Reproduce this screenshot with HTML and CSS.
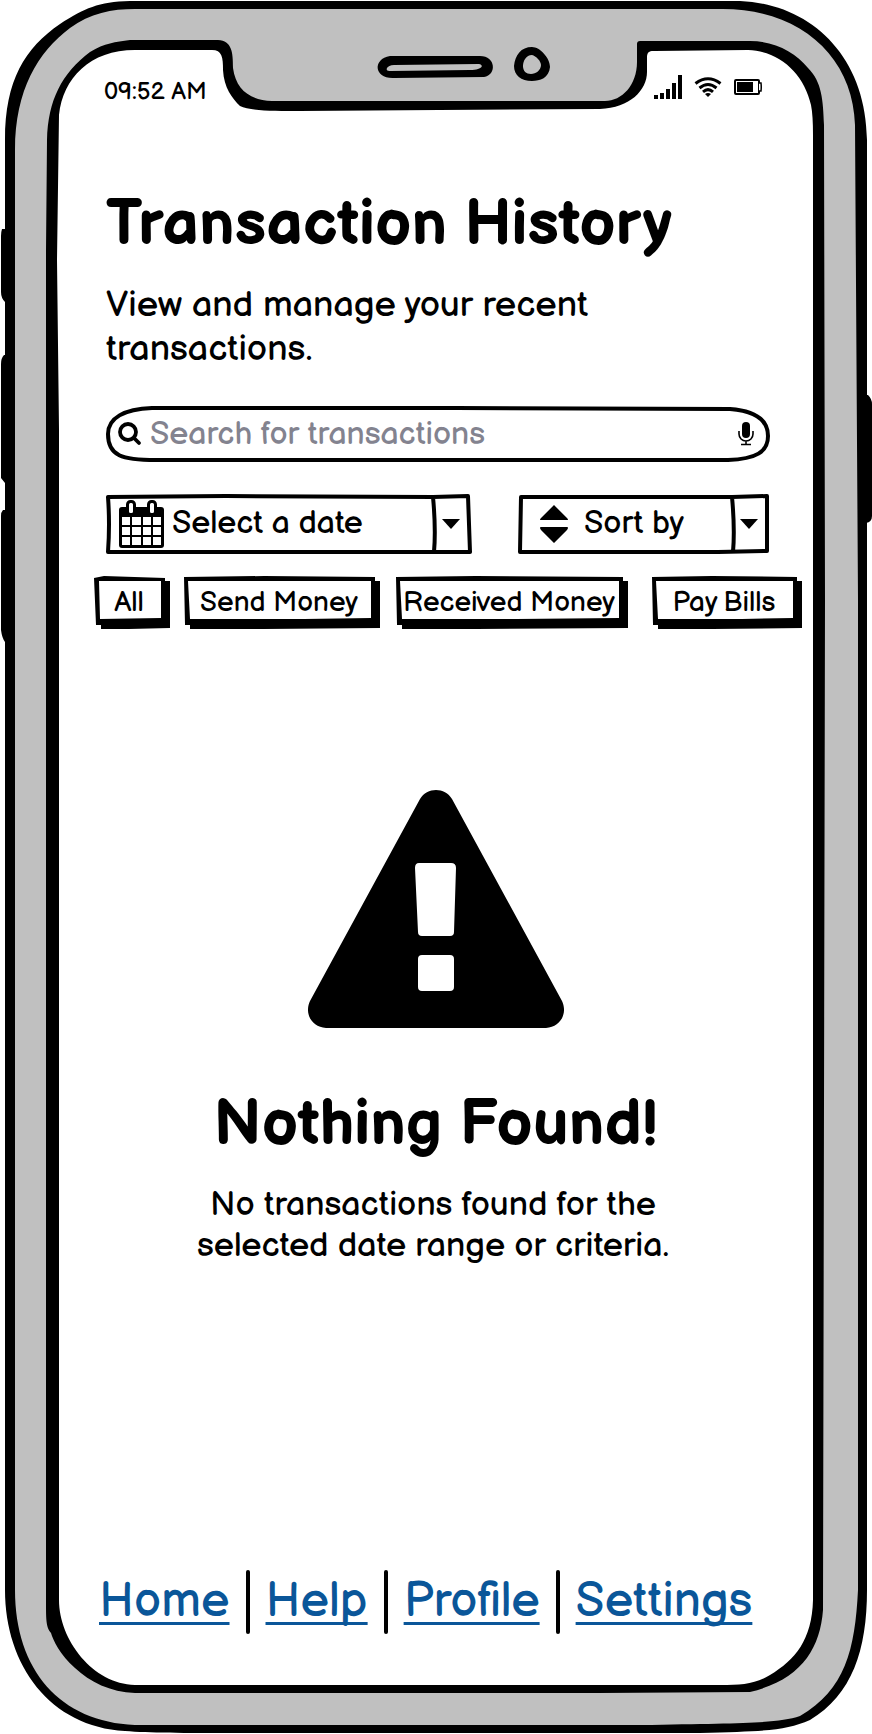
FILE: index.html
```html
<!DOCTYPE html>
<html lang="en">
<head>
<meta charset="utf-8">
<meta name="viewport" content="width=device-width, initial-scale=1">
<title>Transaction History</title>
<link rel="stylesheet" href="styles.css">
</head>
<body>
<div class="phone">
  <svg class="sketch" viewBox="0 0 872 1734" preserveAspectRatio="none" aria-hidden="true">
    <path d="M8 229L2 229Q1 232 1 236V292Q1 298 5 302H8ZM8 355H4Q1 358 1 364V478L5 483H8ZM8 510H3Q1 512 1 516V630Q2 638 5 642H8ZM864 395H868Q872 399 872 404V516Q872 522 866 523H864Z"/>
    <path d="M130 1H740C810 4 866 55 867 140V1590C867 1650 852 1695 810 1720C785 1731 765 1731 700 1733H240C180 1733 150 1733 125 1731C50 1727 5 1665 5 1590V140C5 80 25 48 60 24C85 8 98 2 130 1Z"/>
    <path fill="#c0c0c0" d="M135 9H720C798 8 853 55 855 125L858 600V1590C855 1650 845 1690 800 1716C775 1724 740 1723 640 1725H135C60 1722 15 1670 15 1590V150C15 90 38 52 70 28C90 13 112 9 135 9Z"/>
    <path d="M130 40H218C232 41 233 52 233 68C236 90 250 100 272 101H605C622 101 637 85 637 62V44Q637 41 640 41H750C775 41 795 52 808 68C822 82 823 100 824 125L825 600L823 1610C820 1650 800 1680 750 1692L600 1693H135C110 1692 90 1682 75 1668C60 1655 53 1640 51 1633C46 1627 46 1620 46 1600V250L47 140C48 100 62 73 90 52C105 43 115 42 130 40Z"/>
    <path fill="#fff" d="M135 50H212C222 50 223 57 223 70C224 88 232 98 240 106C250 111 275 111 300 111L600 109C630 108 647 90 647 72V56C648 51 650 51 655 51L748 50C780 51 804 74 811 105Q813 115 813 135V1600C812 1640 795 1660 770 1675C755 1684 742 1685 720 1685H135C93 1684 59 1640 59 1600V430L57 260L59 115C63 78 90 50 135 50Z"/>
    <path fill-rule="evenodd" d="M390 56H480C496 56 497 75 484 77L394 78C374 79 372 59 390 56ZM394 65C386 65 384 72 391 71L470 70C484 70 484 64 478 64Z"/>
    <path fill-rule="evenodd" d="M532 47C540 47 550 58 550 67C549 78 540 81 532 81C521 81 514 75 514 66C515 55 521 47 532 47ZM532 55C526 55 523 61 523 66C523 71 526 74 531 74C536 74 541 70 541 65C541 61 536 56 532 55Z"/>
  </svg>

  <div class="status">
    <time>09:52 AM</time>
    <div class="status-icons">
      <svg width="28" height="24" viewBox="0 0 28 24" aria-hidden="true"><path d="M0 20h4v4H0zM6 18h4v6H6zM12 14h4v10h-4zM18 8h4v16h-4zM24 0h4v24h-4z"/></svg>
      <svg width="28" height="24" viewBox="0 0 28 24" fill="none" stroke="#000" stroke-width="3" aria-hidden="true"><path d="M1.500 8.500Q14 -1 26.500 8.500M5.500 13Q14 6 22.500 13M9 16.800Q14 12.500 19 16.800"/><path fill="#000" stroke="none" d="M11 19Q14 17 17 19L14 22z"/></svg>
      <svg width="28" height="24" viewBox="0 0 28 24" aria-hidden="true"><rect x="1" y="5" width="24" height="14" rx="1" fill="none" stroke="#000" stroke-width="2"/><path d="M25 8h2q.5 4 0 8h-2" fill="#fff" stroke="#000" stroke-width="1.500"/><path d="M3 7h16v10H3z"/></svg>
    </div>
  </div>

  <header class="intro">
    <h1>Transaction History</h1>
    <p>View and manage your recent transactions.</p>
  </header>

  <form class="filters">
    <div class="field search">
      <svg class="sketch" viewBox="0 0 664 56" preserveAspectRatio="none" fill="none" stroke="#000" stroke-width="4" aria-hidden="true"><path d="M46 2L350 2L624 3C650 5 662 15 662 30C662 46 650 53 622 54H50C16 54 2 50 2 28C2 12 18 3 46 2Z"/></svg>
      <svg class="lens" viewBox="0 0 24 24" fill="none" stroke="#000" stroke-width="3.800" stroke-linecap="round" aria-hidden="true"><circle cx="10" cy="10" r="8"/><path d="M16 16l5 5"/></svg>
      <input type="search" aria-label="Search for transactions" placeholder="Search for transactions">
      <svg class="mic" viewBox="0 0 16 24" aria-hidden="true"><rect x="4" y="0" width="8" height="16" rx="4"/><path d="M1 9v3a7 7 0 0 0 14 0V9M8 19v3M3 22.500h10" fill="none" stroke="#000" stroke-width="1.600"/></svg>
    </div>
    <div class="selects">
      <div class="field date">
        <svg class="sketch" viewBox="0 0 366 60" preserveAspectRatio="none" fill="none" stroke="#000" stroke-width="4" stroke-linejoin="round" aria-hidden="true"><path d="M2 3L120 2L327 3L362 2L364 58H2Q4 30 2 3ZM327 3Q330 35 328 58"/></svg>
        <svg class="calendar" viewBox="0 0 45 48" aria-hidden="true"><rect y="7" width="45" height="41" rx="3"/><rect x="8.500" y="1.500" width="7" height="13" rx="3" fill="#fff" stroke="#000" stroke-width="3"/><rect x="29.500" y="1.500" width="7" height="13" rx="3" fill="#fff" stroke="#000" stroke-width="3"/><path fill="#fff" d="M3 17h8v8H3zM13 17h9v8h-9zM24 17h8v8h-8zM34 17h8v8h-8zM3 27h8v8H3zM13 27h9v8h-9zM24 27h8v8h-8zM34 27h8v8h-8zM3 37h8v8H3zM13 37h9v8h-9zM24 37h8v8h-8zM34 37h8v8h-8z"/></svg>
        <select aria-label="Date"><option>Select a date</option></select>
        <svg class="caret" viewBox="0 0 18 10" aria-hidden="true"><path d="M0 0h18L9 10z"/></svg>
      </div>
      <div class="field sort">
        <svg class="sketch" viewBox="0 0 252 60" preserveAspectRatio="none" fill="none" stroke="#000" stroke-width="4" stroke-linejoin="round" aria-hidden="true"><path d="M3 3L120 3L214 3L249 2V57L200 58H2ZM214 3Q217 35 215 58"/></svg>
        <svg class="updown" viewBox="0 0 28 38" aria-hidden="true"><path d="M14 0L27 13Q29 15 27 15H1Q-1 15 1 13ZM14 38L27 25Q29 22 27 22H1Q-1 22 1 25Z"/></svg>
        <select aria-label="Sort order"><option>Sort by</option></select>
        <svg class="caret" viewBox="0 0 18 10" aria-hidden="true"><path d="M0 0h18L9 10z"/></svg>
      </div>
    </div>
    <div class="tabs">
      <button type="button" class="tab tab-all">
        <svg class="sketch" viewBox="0 0 76 53" preserveAspectRatio="none" aria-hidden="true"><path fill-rule="evenodd" d="M0 2L10 0L71 2V5H76V52L35 53H7V49H2ZM5 5L6 43L67 42V5Z"/></svg>All</button>
      <button type="button" class="tab tab-send">
        <svg class="sketch" viewBox="0 0 196 53" preserveAspectRatio="none" aria-hidden="true"><path fill-rule="evenodd" d="M0 1L80 0L191 1V5H196V52L80 53H6V49H1ZM4 5L6 43L120 43L187 42V5Z"/></svg>Send Money</button>
      <button type="button" class="tab tab-received">
        <svg class="sketch" viewBox="0 0 232 53" preserveAspectRatio="none" aria-hidden="true"><path fill-rule="evenodd" d="M0 1L80 0L227 1V5H232V52L80 53H6V49H1ZM4 5L6 43L120 43L223 42V5Z"/></svg>Received Money</button>
      <button type="button" class="tab tab-bills">
        <svg class="sketch" viewBox="0 0 150 53" preserveAspectRatio="none" aria-hidden="true"><path fill-rule="evenodd" d="M0 1L60 0L145 1V5H150V52L60 53H6V49H1ZM4 5L6 43L90 43L141 42V5Z"/></svg>Pay Bills</button>
    </div>
  </form>

  <main class="empty">
    <svg class="warning" viewBox="0 0 256 238" aria-hidden="true"><path fill-rule="evenodd" d="M112 9C119 -3 137 -3 144 9L254 211C260 224 252 237 238 238H18C4 237 -4 224 2 211ZM111 73Q107 73 107 78L110 142Q110 146 114 146H142Q146 146 146 142L148 78Q148 73 143 73ZM114 165Q110 165 110 169V197Q110 201 114 201H142Q146 201 146 197V169Q146 165 142 165Z"/></svg>
    <h2>Nothing Found!</h2>
    <p>No transactions found for the selected date range or criteria.</p>
  </main>

  <nav class="links" aria-label="Main">
    <a href="#home">Home</a>
    <span class="rule"></span>
    <a href="#help">Help</a>
    <span class="rule"></span>
    <a href="#profile">Profile</a>
    <span class="rule"></span>
    <a href="#settings">Settings</a>
  </nav>
</div>
</body>
</html>
```

FILE: styles.css
```css
* { box-sizing: border-box; }

body {
  margin: 0;
  background: #fff;
  color: #000;
  font-family: "Balsamiq Sans", Inter, "Open Sans", sans-serif;
  font-feature-settings: "cv11";
}

svg { display: block; flex: none; }

.phone {
  position: relative;
  isolation: isolate;
  display: flex;
  flex-direction: column;
  min-height: 100vh;
  padding: 75px 70px 100px 94px;
}

.sketch {
  position: absolute;
  inset: 0;
  z-index: -1;
  width: 100%;
  height: 100%;
}

.status {
  display: flex;
  justify-content: space-between;
  padding: 0 40px 0 10px;
  font-size: 24px;
  line-height: 33px;
}

.status-icons { display: flex; gap: 12px; }

.intro { padding: 80px 100px 0 12px; }

h1, h2, p { margin: 0; }

h1, h2 {
  font-size: 64px;
  font-weight: 700;
  line-height: 74px;
  white-space: nowrap;
}

.intro p {
  margin-top: 22px;
  font-size: 36px;
  line-height: 44px;
}

.filters { margin-top: 34px; }

.field {
  position: relative;
  isolation: isolate;
  display: flex;
  align-items: center;
}

.search {
  height: 56px;
  margin: 0 32px 0 12px;
  padding: 0 16px 0 12px;
  gap: 8px;
}

.lens { width: 24px; height: 24px; }
.mic { width: 16px; height: 24px; }

input, select, button {
  margin: 0;
  padding: 0;
  border: 0;
  background: none;
  color: #000;
  font: inherit;
  font-feature-settings: inherit;
  appearance: none;
}

input, select {
  flex: 1;
  min-width: 0;
  height: 48px;
  font-size: 32px;
}

select { padding-bottom: 2px; }

input::placeholder { color: #83838f; opacity: 1; }

.selects {
  display: grid;
  grid-template-columns: 366fr 252fr;
  gap: 46px;
  margin: 32px 32px 0 12px;
}

.date, .sort { height: 60px; padding-right: 12px; }
.date { padding-left: 13px; gap: 8px; }
.sort { padding-left: 22px; gap: 16px; }

.calendar { width: 45px; height: 48px; }
.updown { width: 28px; height: 38px; }
.caret { width: 18px; height: 10px; }

.tabs {
  display: grid;
  grid-template-columns: 76fr 210fr 248fr 174fr;
  margin-top: 22px;
}

.tab {
  position: relative;
  isolation: isolate;
  height: 53px;
  padding-right: 6px;
  font-size: 28px;
  white-space: nowrap;
}

.tab-send { margin-left: 14px; }
.tab-received { margin-left: 16px; }
.tab-bills { margin-left: 24px; }

.empty {
  flex: 1;
  display: flex;
  flex-direction: column;
  align-items: center;
  padding: 161px 24px 0 0;
  text-align: center;
}

.warning { width: 256px; height: 238px; }

.empty h2 { margin-top: 60px; }

.empty p {
  max-width: 490px;
  margin-top: 22px;
  padding-right: 6px;
  font-size: 34px;
  line-height: 41px;
}

.links {
  display: flex;
  align-items: center;
  gap: 16px;
  padding-left: 5px;
  font-size: 48px;
  line-height: 64px;
}

.links a {
  color: #0a5699;
  text-decoration: underline;
  text-decoration-thickness: 3px;
  text-underline-offset: 6px;
  text-decoration-skip-ink: none;
}

.rule {
  width: 4px;
  height: 64px;
  border-radius: 2px;
  background: #000;
}
```
